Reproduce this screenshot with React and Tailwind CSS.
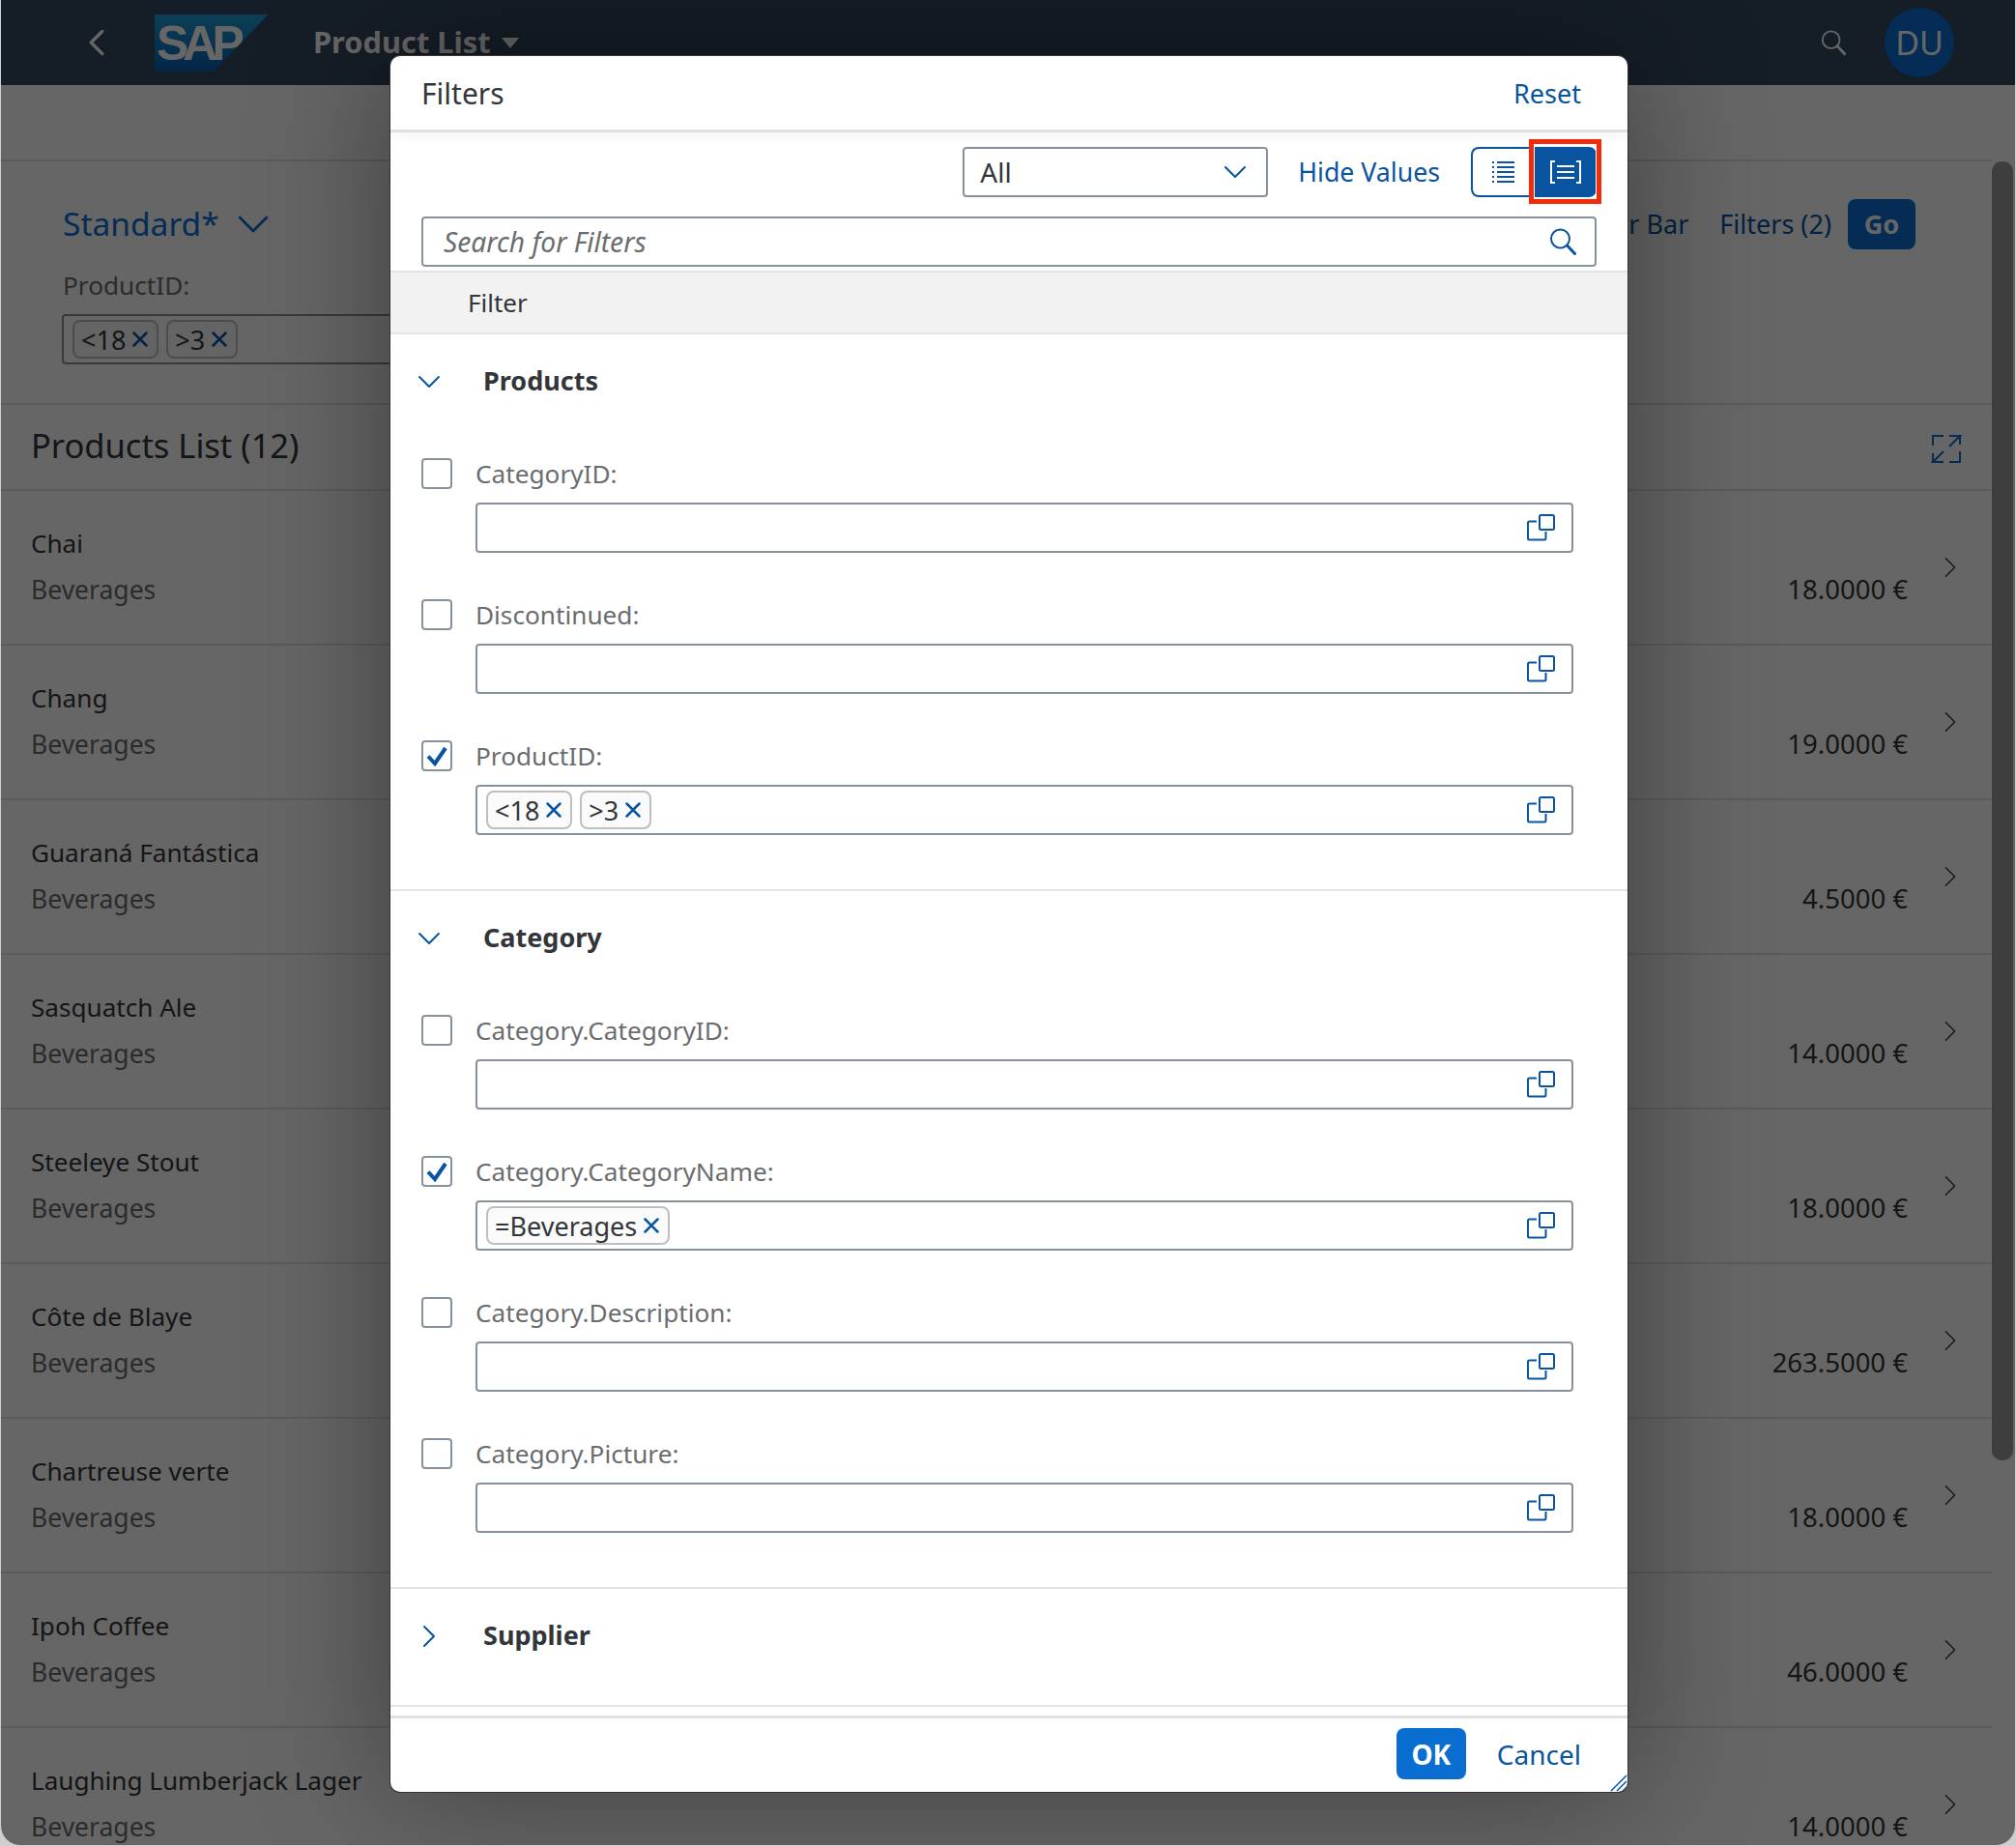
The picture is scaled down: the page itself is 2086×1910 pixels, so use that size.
import React from "react";

const FONT = "font-['Noto_Sans','Open_Sans',sans-serif]";
const products = [
  ["Chai", "18.0000 €"],
  ["Chang", "19.0000 €"],
  ["Guaraná Fantástica", "4.5000 €"],
  ["Sasquatch Ale", "14.0000 €"],
  ["Steeleye Stout", "18.0000 €"],
  ["Côte de Blaye", "263.5000 €"],
  ["Chartreuse verte", "18.0000 €"],
  ["Ipoh Coffee", "46.0000 €"],
  ["Laughing Lumberjack Lager", "14.0000 €"],
];

function Chevron({ dir = "down", className = "", size = 26, color = "#0854a0", sw = 2 }) {
  const d = { down: "M3 8 L13 18 L23 8", right: "M8 3 L18 13 L8 23", left: "M18 3 L8 13 L18 23" }[dir];
  return (
    <svg width={size} height={size} viewBox="0 0 26 26" fill="none" className={className}>
      <path d={d} stroke={color} strokeWidth={sw} strokeLinecap="round" strokeLinejoin="round" />
    </svg>
  );
}

function ValueHelp({ color = "#0854a0" }) {
  return (
    <svg width="30" height="30" viewBox="0 0 30 30" fill="none">
      <path d="M11 8.5 H3.5 A1.5 1.5 0 0 0 2 10 V26 A1.5 1.5 0 0 0 3.5 27.5 H19 A1.5 1.5 0 0 0 20.500 26 V19" stroke={color} strokeWidth="2" />
      <rect x="14" y="2" width="15" height="15" rx="1.5" stroke={color} strokeWidth="2" />
    </svg>
  );
}

function SearchIcon({ color = "#0854a0", size = 30 }) {
  return (
    <svg width={size} height={size} viewBox="0 0 30 30" fill="none">
      <circle cx="12.500" cy="12" r="9.500" stroke={color} strokeWidth="2" />
      <path d="M19.500 19 L27.500 27.500" stroke={color} strokeWidth="3" strokeLinecap="round" />
    </svg>
  );
}

function Cross({ color = "#0854a0" }) {
  return (
    <svg width="18" height="18" viewBox="0 0 18 18" fill="none">
      <path d="M2.500 2.500 L15.500 15.500 M15.500 2.500 L2.500 15.500" stroke={color} strokeWidth="2.500" strokeLinecap="round" />
    </svg>
  );
}

function Tag({ label }) {
  return (
    <span className="flex items-center gap-[6px] h-[40px] pl-[7px] pr-[8px] rounded-[8px] border-2 border-[#bfbfbf] bg-[#fafafa] text-[27px] leading-none text-[#32363a]">
      {label}
      <Cross />
    </span>
  );
}

function FilterRow({ label, checked, tags }) {
  return (
    <div className="h-[146px] pl-[32px] pr-[56px] flex gap-[24px]">
      <div className="mt-[2px] w-[32px] h-[32px] shrink-0 rounded-[4px] border-2 border-[#89919a] flex items-center justify-center">
        {checked && (
          <svg width="24" height="24" viewBox="0 0 24 24" fill="none">
            <path d="M3 12.500 L10 20 L21 4" stroke="#0854a0" strokeWidth="4" />
          </svg>
        )}
      </div>
      <div className="flex-1 min-w-0">
        <div className="h-[36px] flex items-center text-[26.200px] text-[#6a6d70] leading-none">{label}</div>
        <div className="mt-[12px] h-[52px] rounded-[4px] border-2 border-[#89919a] flex items-center pl-[9px] pr-[17px] gap-[8px]">
          {tags && tags.map((t) => <Tag key={t} label={t} />)}
          <span className="ml-auto flex"><ValueHelp /></span>
        </div>
      </div>
    </div>
  );
}

function GroupHeader({ title, open }) {
  return (
    <div className="h-[100px] pb-[2px] flex items-center">
      <Chevron dir={open ? "down" : "right"} className="ml-[27px]" size={26} />
      <span className="ml-[43px] pb-[3px] text-[27px] font-bold text-[#32363a] leading-none">{title}</span>
    </div>
  );
}

function Background() {
  return (
    <div className="h-[1910px] overflow-hidden flex bg-white">
      <div className="flex-1 min-w-0">
        <div className="h-[88px] -mr-[24px] bg-[#354a5f] flex items-center relative">
          <Chevron dir="left" color="#ffffff" size={30} sw={3} className="ml-[84px]" />
          <div className="ml-[45px] w-[118px] h-[59px] flex items-center pl-[2px] pt-[1px] bg-gradient-to-b from-[#1f9fd8] to-[#0a5fb4] [clip-path:polygon(0_0,100%_0,52%_100%,0_100%)]">
            <span className="font-['Liberation_Sans',sans-serif] font-bold text-[50px] leading-none tracking-[-6px] text-white">SAP</span>
          </div>
          <span className="ml-[46px] -mt-[2px] text-[30.800px] font-bold text-white leading-none">Product List</span>
          <span className="ml-[11px] w-0 h-0 border-x-[9px] border-x-transparent border-t-[11px] border-t-white" />
          <span className="ml-auto flex"><SearchIcon color="#ffffff" size={28} /></span>
          <div className="ml-[39px] mr-[63px] w-[72px] h-[72px] rounded-full bg-[#0a6ed1] flex items-center justify-center text-[34px] text-white">DU</div>
        </div>
        <div className="h-[79px] border-b-2 border-[#e4e4e4]" />
        <div className="h-[252px] border-b-2 border-[#e4e4e4] pl-[64px] pr-[79px] pt-[39px] flex justify-between">
          <div>
            <div className="h-[50px] pt-[2px] flex items-center gap-[17px]">
              <span className="text-[33.500px] text-[#0a6ed1] leading-none">Standard*</span>
              <Chevron dir="down" size={36} color="#0a6ed1" sw={2} />
            </div>
            <div className="mt-[26px] text-[26.200px] text-[#6a6d70] leading-none">ProductID:</div>
            <div className="mt-[17px] w-[380px] h-[52px] -ml-[1px] rounded-[4px] border-2 border-[#89919a] flex items-center pl-[9px] gap-[8px]">
              <Tag label="<18" />
              <Tag label=">3" />
            </div>
          </div>
          <div className="flex items-start gap-[32px]">
            <div className="h-[52px] flex items-center text-[27px] text-[#0854a0]">Hide Filter Bar</div>
            <div className="h-[52px] flex items-center text-[27px] text-[#0854a0]">Filters (2)</div>
            <div className="-ml-[15px] h-[52px] w-[70px] rounded-[8px] bg-[#0a6ed1] flex items-center justify-center text-[27px] font-bold text-white">Go</div>
          </div>
        </div>
        <div className="h-[89px] border-b-2 border-[#e4e4e4] pl-[31px] pr-[31px] pb-[3px] flex items-center justify-between">
          <span className="text-[34.500px] text-[#32363a] leading-none">Products List (12)</span>
          <svg width="32" height="32" viewBox="0 0 32 32" fill="none" className="mt-[6px]">
            <path d="M2 13 V3 H13 M19 3 H30 L19 14 M30 3 V12 M30 19 V30 H19 M13 30 H2 L13 19 M2 30 V21" stroke="#0a6ed1" strokeWidth="2" />
          </svg>
        </div>
        {products.map(([name, price]) => (
          <div key={name} className="h-[160px] shrink-0 border-b-2 border-[#e4e4e4] pl-[31px] pr-[31px] flex justify-between">
            <div className="pt-[36px]">
              <div className="text-[26.100px] text-[#32363a] leading-[36px]">{name}</div>
              <div className="mt-[12px] text-[26.500px] text-[#6a6d70] leading-[36px]">Beverages</div>
            </div>
            <div className="flex gap-[32px]">
              <div className="pt-[84px] text-[27.500px] text-[#32363a] leading-[36px]">{price}</div>
              <Chevron dir="right" size={24} color="#32363a" sw={1.500} className="mt-[67px]" />
            </div>
          </div>
        ))}
      </div>
      <div className="w-[24px] shrink-0 relative pt-[167px] pr-[2px]">
        <div className="h-[1344px] rounded-[10px] bg-[#9c9c9c]" />
      </div>
    </div>
  );
}

function Dialog() {
  return (
    <div className="absolute left-[403px] top-[58px] w-[1280px] h-[1796px] bg-white rounded-[10px] flex flex-col overflow-hidden shadow-[0_0_0_1px_#333,0_0_140px_rgba(0,0,0,0.4)]">
      <div className="h-[79px] shrink-0 relative border-b-[3px] border-[#e0e0e0] shadow-[0_6px_10px_rgba(0,0,0,0.04)] flex items-center justify-between pl-[32px] pr-[48px]">
        <span className="pt-[1px] text-[30px] text-[#32363a] leading-none">Filters</span>
        <span className="text-[27px] text-[#0854a0] leading-none">Reset</span>
      </div>
      <div className="h-[140px] shrink-0 flex flex-col">
        <div className="h-[87px] shrink-0 flex items-center justify-end pr-[32px] pb-[5px]">
          <div className="w-[316px] h-[52px] rounded-[4px] border-2 border-[#89919a] flex items-center justify-between pl-[16px] pr-[19px]">
            <span className="text-[28px] text-[#32363a] leading-none">All</span>
            <Chevron dir="down" size={26} />
          </div>
          <span className="ml-[31px] text-[26.700px] text-[#0854a0] leading-none">Hide Values</span>
          <div className="ml-[32px] flex h-[52px] relative">
            <div className="w-[66px] rounded-l-[8px] border-2 border-r-0 border-[#0854a0] flex items-center justify-center">
              <svg width="26" height="26" viewBox="0 0 26 26" fill="none">
                <path d="M6 3 H24 M6 8 H24 M6 13 H24 M6 18 H24 M6 23 H24" stroke="#0854a0" strokeWidth="2" />
                <path d="M1 3 H3 M1 8 H3 M1 13 H3 M1 18 H3 M1 23 H3" stroke="#0854a0" strokeWidth="2" />
              </svg>
            </div>
            <div className="w-[64px] rounded-r-[8px] bg-[#0854a0] flex items-center justify-center">
              <svg width="34" height="26" viewBox="0 0 34 26" fill="none">
                <path d="M6 2 H2 V24 H6 M28 2 H32 V24 H28" stroke="#fff" strokeWidth="2" />
                <path d="M8 7 H26 M8 13 H26 M8 19 H26" stroke="#fff" strokeWidth="2" />
              </svg>
            </div>
            <div className="absolute left-[60px] top-[-8px] w-[75px] h-[67px] border-[5px] border-[#f22b0b] shadow-[inset_0_0_0_1px_#ffffff] pointer-events-none" />
          </div>
        </div>
        <div className="ml-[32px] mr-[32px] h-[52px] rounded-[4px] border-2 border-[#89919a] flex items-center justify-between pl-[21px] pr-[18px]">
          <span className="text-[28.200px] italic text-[#6a6d70] leading-none">Search for Filters</span>
          <SearchIcon />
        </div>
      </div>
      <div className="h-[66px] shrink-0 mt-[3px] border-y-2 border-[#e4e4e4] bg-[#f2f2f2] flex items-center pl-[80px] text-[26px] text-[#32363a] leading-none">Filter</div>
      <div className="flex-1 min-h-0 overflow-hidden">
        <div className="h-[576px] border-b-2 border-[#e4e4e4]">
          <GroupHeader title="Products" open />
          <div className="pt-[26px]">
            <FilterRow label="CategoryID:" />
            <FilterRow label="Discontinued:" />
            <FilterRow label="ProductID:" checked tags={["<18", ">3"]} />
          </div>
        </div>
        <div className="h-[722px] border-b-2 border-[#e4e4e4]">
          <GroupHeader title="Category" open />
          <div className="pt-[26px]">
            <FilterRow label="Category.CategoryID:" />
            <FilterRow label="Category.CategoryName:" checked tags={["=Beverages"]} />
            <FilterRow label="Category.Description:" />
            <FilterRow label="Category.Picture:" />
          </div>
        </div>
        <div className="h-[122px] border-b-2 border-[#e4e4e4]">
          <GroupHeader title="Supplier" />
        </div>
      </div>
      <div className="h-[79px] shrink-0 pb-[3px] border-t-[3px] border-[#e0e0e0] flex items-center justify-end gap-[32px] pr-[48px] relative">
        <div className="w-[72px] h-[53px] rounded-[8px] bg-[#0a6ed1] flex items-center justify-center text-[28px] font-bold text-white">OK</div>
        <span className="text-[28px] text-[#0854a0] leading-none">Cancel</span>
        <svg width="18" height="18" viewBox="0 0 18 18" fill="none" className="absolute right-0 bottom-0">
          <path d="M1 17 L17 1 M7 17 L17 7 M13 17 L17 13" stroke="#0854a0" strokeWidth="1.500" />
        </svg>
      </div>
    </div>
  );
}

export default function App() {
  return (
    <div className={`${FONT} w-[2086px] h-[1910px] overflow-hidden bg-[#cfcfcf] px-[1px]`}>
      <div className="relative h-[1909px] rounded-b-[20px] overflow-hidden">
        <Background />
        <div className="absolute inset-0 bg-black/60" />
        <Dialog />
      </div>
    </div>
  );
}
